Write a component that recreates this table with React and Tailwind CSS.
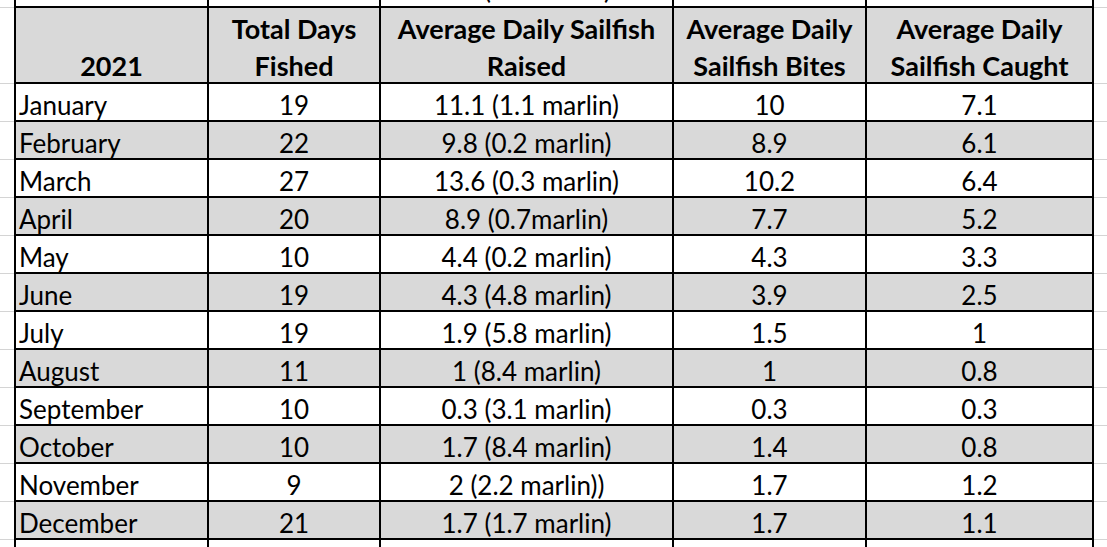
const rows = [
  ['January', '19', '11.1 (1.1 marlin)', '10', '7.1'],
  ['February', '22', '9.8 (0.2 marlin)', '8.9', '6.1'],
  ['March', '27', '13.6 (0.3 marlin)', '10.2', '6.4'],
  ['April', '20', '8.9 (0.7marlin)', '7.7', '5.2'],
  ['May', '10', '4.4 (0.2 marlin)', '4.3', '3.3'],
  ['June', '19', '4.3 (4.8 marlin)', '3.9', '2.5'],
  ['July', '19', '1.9 (5.8 marlin)', '1.5', '1'],
  ['August', '11', '1 (8.4 marlin)', '1', '0.8'],
  ['September', '10', '0.3 (3.1 marlin)', '0.3', '0.3'],
  ['October', '10', '1.7 (8.4 marlin)', '1.4', '0.8'],
  ['November', '9', '2 (2.2 marlin))', '1.7', '1.2'],
  ['December', '21', '1.7 (1.7 marlin)', '1.7', '1.1'],
];

const widths = ['w-[193px]', 'w-[172px]', 'w-[293px]', 'w-[193px]', 'w-[229px] border-r-2'];

function Row({ cells, gray, tall, header }) {
  const h = tall ? 'h-[76px]' : 'h-[38px]';
  const bg = gray ? 'bg-[#d9d9d9]' : 'bg-white';
  return (
    <div className={`flex ${h}`}>
      <div className="w-[14px] shrink-0 border-b border-[#d4d4d4]" />
      {cells.map((c, i) => (
        <div
          key={i}
          className={`${widths[i]} shrink-0 box-border border-l-2 border-b-2 border-black ${bg} flex items-end overflow-hidden ${
            i === 0 && !header ? 'justify-start pl-[3px]' : 'justify-center text-center'
          } ${header ? 'font-bold text-[27px] leading-[37px]' : 'leading-[30px]'}`}
        >
          {header ? <span className="translate-y-[2px]">{c}</span> : c}
        </div>
      ))}
      <div className="flex-1 border-b border-[#d4d4d4]" />
    </div>
  );
}

export default function App() {
  return (
    <div
      className="w-[1107px] h-[547px] overflow-hidden bg-white text-black text-[26px]"
      style={{ fontFamily: 'Lato, "Open Sans", sans-serif' }}
    >
      <div className="-mt-[30px]">
        <Row cells={['', '', <span className="pl-[42px] -translate-y-[2px]">(1.1 marlin)</span>, '', '']} />
        <Row
          tall
          header
          gray
          cells={[
            '2021',
            <span>Total Days<br />Fished</span>,
            <span>Average Daily Sailfish<br />Raised</span>,
            <span>Average Daily<br />Sailfish Bites</span>,
            <span>Average Daily<br />Sailfish Caught</span>,
          ]}
        />
        {rows.map((r, i) => (
          <Row key={r[0]} cells={r} gray={i % 2 === 1} />
        ))}
        <Row cells={['', '', '', '', '']} />
      </div>
    </div>
  );
}
